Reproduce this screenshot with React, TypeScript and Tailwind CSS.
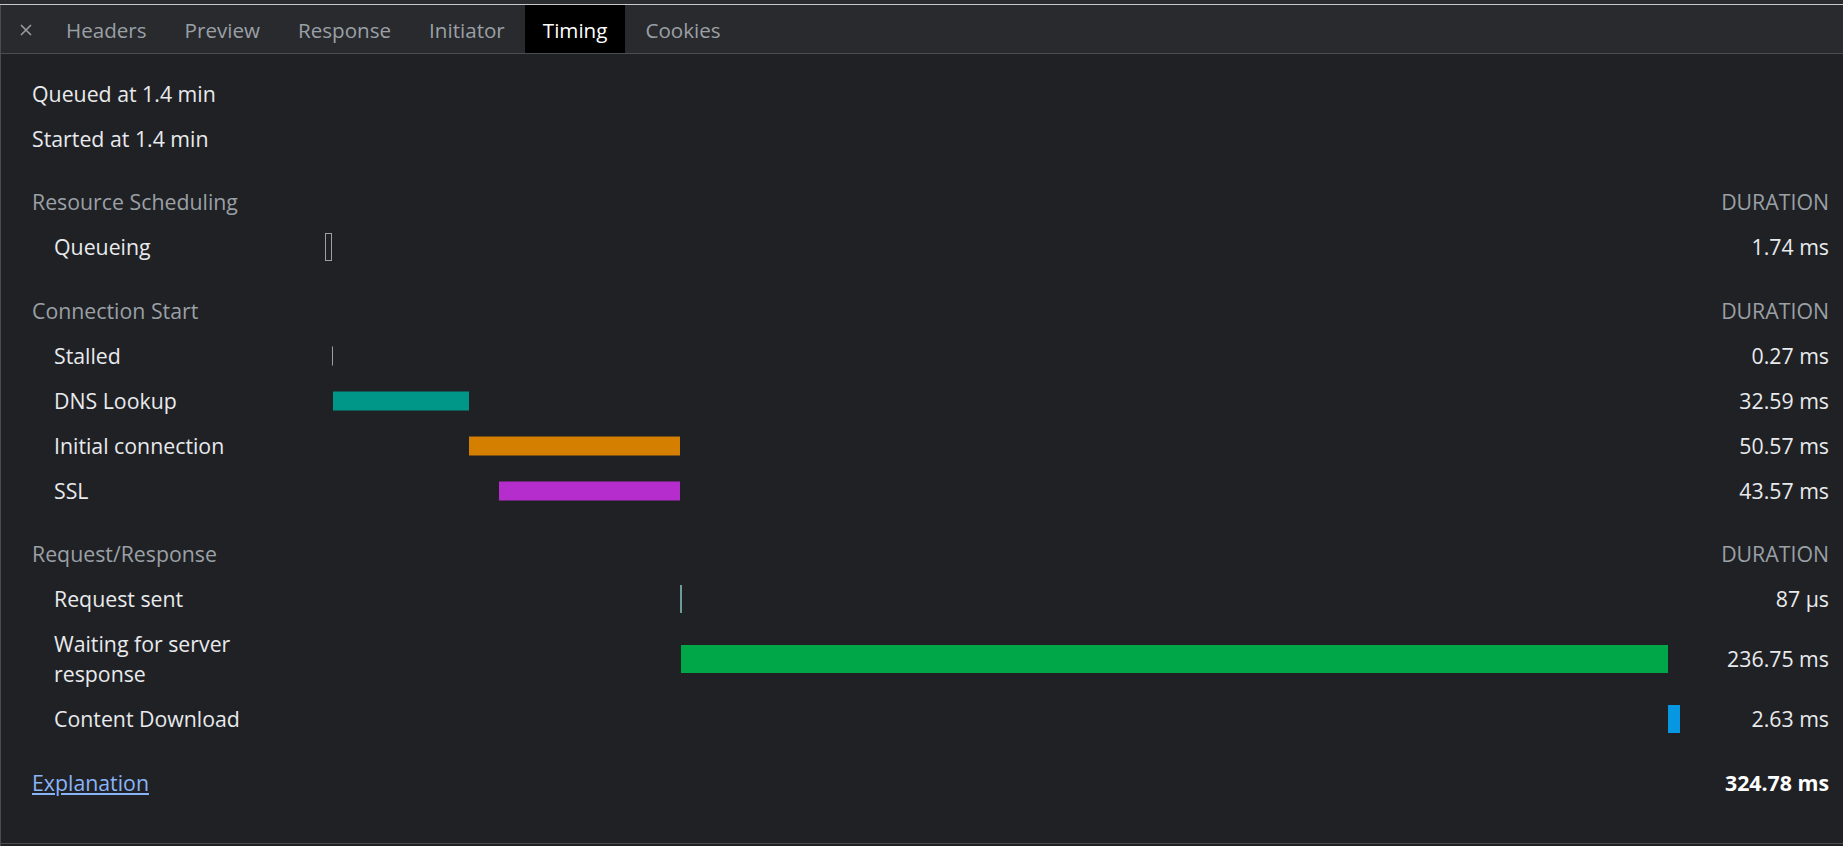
import React from "react";

const FONT = { fontFamily: '"Open Sans", "Noto Sans", sans-serif' };

const TOTAL_MS = 324.78;
const BAR_W = 1355;
const px = (ms: number) => (ms / TOTAL_MS) * BAR_W;

type Bar = {
  start: number;
  end: number;
  color: string;
  h: number;
  minW?: number;
  outline?: boolean;
};

type Row = { label: string; duration: string; bar: Bar };
type Section = { title: string; rows: Row[] };

const sections: Section[] = [
  {
    title: "Resource Scheduling",
    rows: [
      { label: "Queueing", duration: "1.74 ms", bar: { start: 0, end: 1.74, color: "#9aa0a6", h: 28, outline: true } },
    ],
  },
  {
    title: "Connection Start",
    rows: [
      { label: "Stalled", duration: "0.27 ms", bar: { start: 1.74, end: 2.01, color: "#9aa0a6", h: 19, minW: 1 } },
      { label: "DNS Lookup", duration: "32.59 ms", bar: { start: 2.01, end: 34.6, color: "#009688", h: 19 } },
      { label: "Initial connection", duration: "50.57 ms", bar: { start: 34.6, end: 85.17, color: "#d47f00", h: 19 } },
      { label: "SSL", duration: "43.57 ms", bar: { start: 41.6, end: 85.17, color: "#b52dcd", h: 19 } },
    ],
  },
  {
    title: "Request/Response",
    rows: [
      { label: "Request sent", duration: "87 µs", bar: { start: 85.17, end: 85.26, color: "#6f9a9a", h: 28, minW: 2 } },
      { label: "Waiting for server response", duration: "236.75 ms", bar: { start: 85.26, end: 322.01, color: "#00a748", h: 28 } },
      { label: "Content Download", duration: "2.63 ms", bar: { start: 322.01, end: 324.78, color: "#0597e1", h: 28 } },
    ],
  },
];

const tabs = ["Headers", "Preview", "Response", "Initiator", "Timing", "Cookies"];

function TimelineBar({ bar }: { bar: Bar }) {
  const left = px(bar.start);
  const width = Math.max(px(bar.end - bar.start), bar.minW ?? 0);
  return (
    <div className="relative w-[1355px] shrink-0 self-stretch">
      <div
        className={bar.outline ? "absolute top-1/2 -translate-y-1/2 border" : "absolute top-1/2 -translate-y-1/2"}
        style={{
          left,
          width,
          height: bar.h,
          background: bar.outline ? "transparent" : bar.color,
          borderColor: bar.outline ? bar.color : undefined,
        }}
      />
    </div>
  );
}

export default function App() {
  return (
    <div className="flex h-[846px] w-full flex-col bg-[#202124] text-[#e8eaed]" style={FONT}>
      {/* top strip */}
      <div className="h-[4px] bg-[#2a2b2e]" />
      <div className="h-px bg-[#c8c8c8]" />

      <div className="flex flex-1 flex-col border-l border-[#4a4c50]">
        {/* tabs */}
        <div className="flex h-[49px] items-start border-b border-[#4a4c50] bg-[#292a2d] text-[20.6px]">
          <div className="flex h-[48px] items-center pl-[19px] pr-[16px] pt-[1px]">
            <svg width="12" height="12" viewBox="0 0 12 12">
              <path d="M1 1 L11 11 M11 1 L1 11" stroke="#9aa0a6" strokeWidth="1.5" />
            </svg>
          </div>
          <div className="flex gap-[2px]">
            {tabs.map((t) => (
              <div
                key={t}
                className={
                  t === "Timing"
                    ? "flex h-[48px] items-center bg-black px-[18px] pt-[3px] text-white"
                    : "flex h-[48px] items-center px-[18px] pt-[3px] text-[#9aa0a6]"
                }
              >
                {t}
              </div>
            ))}
          </div>
        </div>

        {/* content */}
        <div className="flex-1 border-b border-[#4a4c50] pl-[31px] pr-[14px] pt-[17px] text-[21.3px] leading-[30px]">
          <div className="py-[7.5px]">Queued at 1.4 min</div>
          <div className="py-[7.5px]">Started at 1.4 min</div>

          {sections.map((s) => (
            <div key={s.title}>
              <div className="mt-[18.5px] flex justify-between py-[7.5px] text-[#9aa0a6]">
                <span>{s.title}</span>
                <span>DURATION</span>
              </div>
              {s.rows.map((r) => (
                <div key={r.label} className="flex">
                  <div className="w-[293px] shrink-0 py-[7.5px] pl-[22px] pr-[20px]">{r.label}</div>
                  <TimelineBar bar={r.bar} />
                  <div className="flex flex-1 items-center justify-end">{r.duration}</div>
                </div>
              ))}
            </div>
          ))}

          <div className="mt-[18.5px] flex justify-between py-[7.5px]">
            <a href="#" className="text-[#8ab4f8] underline">
              Explanation
            </a>
            <span className="font-bold text-white">324.78 ms</span>
          </div>
        </div>
        <div className="h-[2px]" />
      </div>
    </div>
  );
}
